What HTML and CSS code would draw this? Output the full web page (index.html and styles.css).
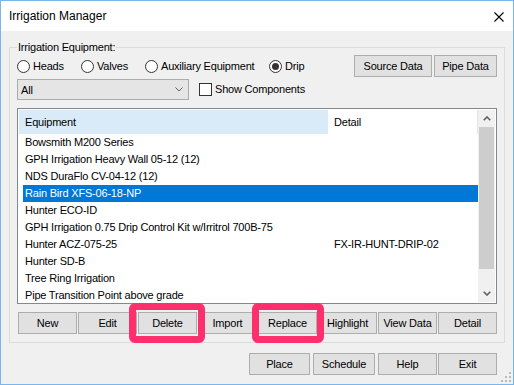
FILE: index.html
```html
<!doctype html>
<html lang="en">
<head>
  <meta charset="utf-8">
  <title>Irrigation Manager</title>
  <link rel="stylesheet" href="styles.css">
</head>
<body>
  <div class="window">
    <div class="titlebar">
      <span class="title">Irrigation Manager</span>
      <svg class="close" width="10" height="10" viewBox="0 0 10 10"><path d="M0.5 0.5L9.5 9.5M9.5 0.5L0.5 9.5" stroke="#000" stroke-width="1.1" fill="none"/></svg>
    </div>
    <div class="content">
      <fieldset class="group">
        <legend>Irrigation Equipment:</legend>
        <div class="type-row">
          <label class="radio radio-sm"><input type="radio" name="kind"> Heads</label>
          <label class="radio radio-sm"><input type="radio" name="kind"> Valves</label>
          <label class="radio radio-lg"><input type="radio" name="kind"> Auxiliary Equipment</label>
          <label class="radio"><input type="radio" name="kind" checked> Drip</label>
          <div class="type-buttons">
            <button class="btn btn-source">Source Data</button>
            <button class="btn btn-pipe">Pipe Data</button>
          </div>
        </div>
        <div class="filter-row">
          <div class="combo">
            <span>All</span>
            <svg width="8" height="5" viewBox="0 0 8 5"><path d="M0.5 0.5L4 4L7.5 0.5" stroke="#606060" stroke-width="1" fill="none"/></svg>
          </div>
          <label class="check"><input type="checkbox"> Show Components</label>
        </div>
        <div class="list">
          <div class="list-table">
            <div class="list-head">
              <div class="head-equip">Equipment</div>
              <div class="head-detail">Detail</div>
            </div>
            <div class="list-row"><span>Bowsmith M200 Series</span><span></span></div>
            <div class="list-row"><span>GPH Irrigation Heavy Wall 05-12 (12)</span><span></span></div>
            <div class="list-row"><span>NDS DuraFlo CV-04-12 (12)</span><span></span></div>
            <div class="list-row selected"><span>Rain Bird XFS-06-18-NP</span><span></span></div>
            <div class="list-row"><span>Hunter ECO-ID</span><span></span></div>
            <div class="list-row"><span>GPH Irrigation 0.75 Drip Control Kit w/Irritrol 700B-75</span><span></span></div>
            <div class="list-row"><span>Hunter ACZ-075-25</span><span>FX-IR-HUNT-DRIP-02</span></div>
            <div class="list-row"><span>Hunter SD-B</span><span></span></div>
            <div class="list-row"><span>Tree Ring Irrigation</span><span></span></div>
            <div class="list-row"><span>Pipe Transition Point above grade</span><span></span></div>
          </div>
          <div class="scrollbar">
            <div class="scroll-arrow">
              <svg width="8" height="5" viewBox="0 0 8 5"><path d="M0.7 4.3L4 1L7.3 4.3" stroke="#606060" stroke-width="1.6" fill="none"/></svg>
            </div>
            <div class="scroll-thumb"></div>
            <div class="scroll-track"></div>
            <div class="scroll-arrow">
              <svg width="8" height="5" viewBox="0 0 8 5"><path d="M0.7 0.7L4 4L7.3 0.7" stroke="#606060" stroke-width="1.6" fill="none"/></svg>
            </div>
          </div>
        </div>
        <div class="actions">
          <button class="btn">New</button>
          <button class="btn">Edit</button>
          <span class="marked marked-delete"><button class="btn">Delete</button></span>
          <button class="btn">Import</button>
          <span class="marked marked-replace"><button class="btn">Replace</button></span>
          <button class="btn">Highlight</button>
          <button class="btn">View Data</button>
          <button class="btn">Detail</button>
        </div>
      </fieldset>
      <div class="footer">
        <button class="btn btn-place">Place</button>
        <button class="btn btn-schedule">Schedule</button>
        <button class="btn">Help</button>
        <button class="btn">Exit</button>
      </div>
    </div>
    <svg class="grip" width="12" height="12" viewBox="0 0 12 12">
      <rect x="9" y="1" width="2" height="2" fill="#bcbcbc"/>
      <rect x="5" y="5" width="2" height="2" fill="#bcbcbc"/>
      <rect x="9" y="5" width="2" height="2" fill="#bcbcbc"/>
      <rect x="1" y="9" width="2" height="2" fill="#bcbcbc"/>
      <rect x="5" y="9" width="2" height="2" fill="#bcbcbc"/>
      <rect x="9" y="9" width="2" height="2" fill="#bcbcbc"/>
    </svg>
  </div>
</body>
</html>
```

FILE: styles.css
```css
:root {
  --win-border: #79b5ee;
  --face: #f0f0f0;
  --btn-bg: #e1e1e1;
  --btn-border: #adadad;
  --select: #0078d7;
  --mark: #fd2f6d;
}
body {
  margin: 0;
  font-family: "Liberation Sans", Arial, sans-serif;
  font-size: 11px;
  letter-spacing: -0.2px;
  color: #000;
}
.window {
  position: relative;
  width: 514px;
  height: 385px;
  box-sizing: border-box;
  border: 1px solid var(--win-border);
  background: var(--face);
}
.titlebar {
  height: 30px;
  background: #fff;
  display: flex;
  align-items: center;
  justify-content: space-between;
  padding: 0 9px 0 8px;
}
.title {
  font-size: 12px;
  letter-spacing: 0;
}
.close {
  margin-top: 1px;
}
.content {
  display: flex;
  flex-direction: column;
}
.group {
  margin: 10px 8px 0 8px;
  padding: 2px 7px 8px 7px;
  border: 1px solid #dcdcdc;
  min-width: 0;
}
.group legend {
  padding: 0 1px;
  line-height: 12px;
}
.type-row {
  display: flex;
  align-items: center;
  height: 22px;
}
.radio, .check {
  display: flex;
  align-items: center;
  gap: 3px;
  line-height: 13px;
}
.radio-sm {
  width: 64px;
}
.radio-lg {
  width: 124px;
}
.radio input, .check input {
  appearance: none;
  margin: 0;
  width: 13px;
  height: 13px;
  border: 1px solid #333;
  background: #fff;
  box-sizing: border-box;
  flex-shrink: 0;
}
.radio input {
  border-radius: 50%;
  display: grid;
  place-items: center;
}
.radio input:checked::after {
  content: "";
  width: 7px;
  height: 7px;
  border-radius: 50%;
  background: #333;
}
.type-buttons {
  margin-left: auto;
  display: flex;
  gap: 2px;
}
.btn {
  font: inherit;
  letter-spacing: inherit;
  color: #000;
  height: 22px;
  width: 59px;
  padding: 0;
  background: var(--btn-bg);
  border: 1px solid var(--btn-border);
  border-radius: 0;
}
.btn-source {
  width: 78px;
}
.btn-pipe {
  width: 63px;
}
.filter-row {
  display: flex;
  align-items: center;
  margin-top: 2px;
}
.combo {
  width: 172px;
  height: 21px;
  box-sizing: border-box;
  border: 1px solid #acacac;
  background: #e5e5e5;
  display: flex;
  align-items: center;
  justify-content: space-between;
  padding: 0 5px 0 3px;
  margin-right: 10px;
}
.list {
  margin-top: 8px;
  height: 196px;
  box-sizing: border-box;
  border: 1px solid #828790;
  padding: 1px;
  background: #fff;
  display: flex;
  overflow: hidden;
}
.list-table {
  flex: 1;
  min-width: 0;
}
.list-head {
  display: grid;
  grid-template-columns: 309px 1fr;
  height: 24px;
  line-height: 24px;
}
.head-equip {
  background: #d9ebf9;
  padding-left: 6px;
}
.head-detail {
  padding-left: 6px;
  border-right: 1px solid #e5e5e5;
}
.list-row {
  display: grid;
  grid-template-columns: 303px 1fr;
  margin-left: 4px;
  padding-left: 2px;
  height: 17px;
  line-height: 17px;
  white-space: nowrap;
}
.list-row span:last-child {
  padding-left: 6px;
}
.list-row.selected {
  background: var(--select);
  color: #fff;
}
.scrollbar {
  width: 17px;
  display: flex;
  flex-direction: column;
  background: var(--face);
}
.scroll-arrow {
  height: 17px;
  display: flex;
  align-items: center;
  justify-content: center;
  flex-shrink: 0;
}
.scroll-thumb {
  height: 142px;
  margin: 0 1px;
  background: #cdcdcd;
}
.scroll-track {
  flex: 1;
}
.actions {
  display: flex;
  gap: 1px;
  margin: 8px 0 0 1px;
}
.marked {
  position: relative;
  display: flex;
}
.marked::after {
  content: "";
  position: absolute;
  top: -9px;
  bottom: -9px;
  left: -9px;
  right: -8px;
  border: 7px solid var(--mark);
  border-radius: 6px;
}
.marked-replace::after {
  left: -6px;
  right: -7px;
}
.footer {
  display: flex;
  justify-content: flex-end;
  gap: 1px;
  margin-top: 10px;
  padding-right: 16px;
}
.btn-place {
  width: 61px;
  margin-right: 2px;
}
.btn-schedule {
  width: 62px;
  margin-right: 2px;
}
.grip {
  position: absolute;
  right: 1px;
  bottom: 1px;
}
```
